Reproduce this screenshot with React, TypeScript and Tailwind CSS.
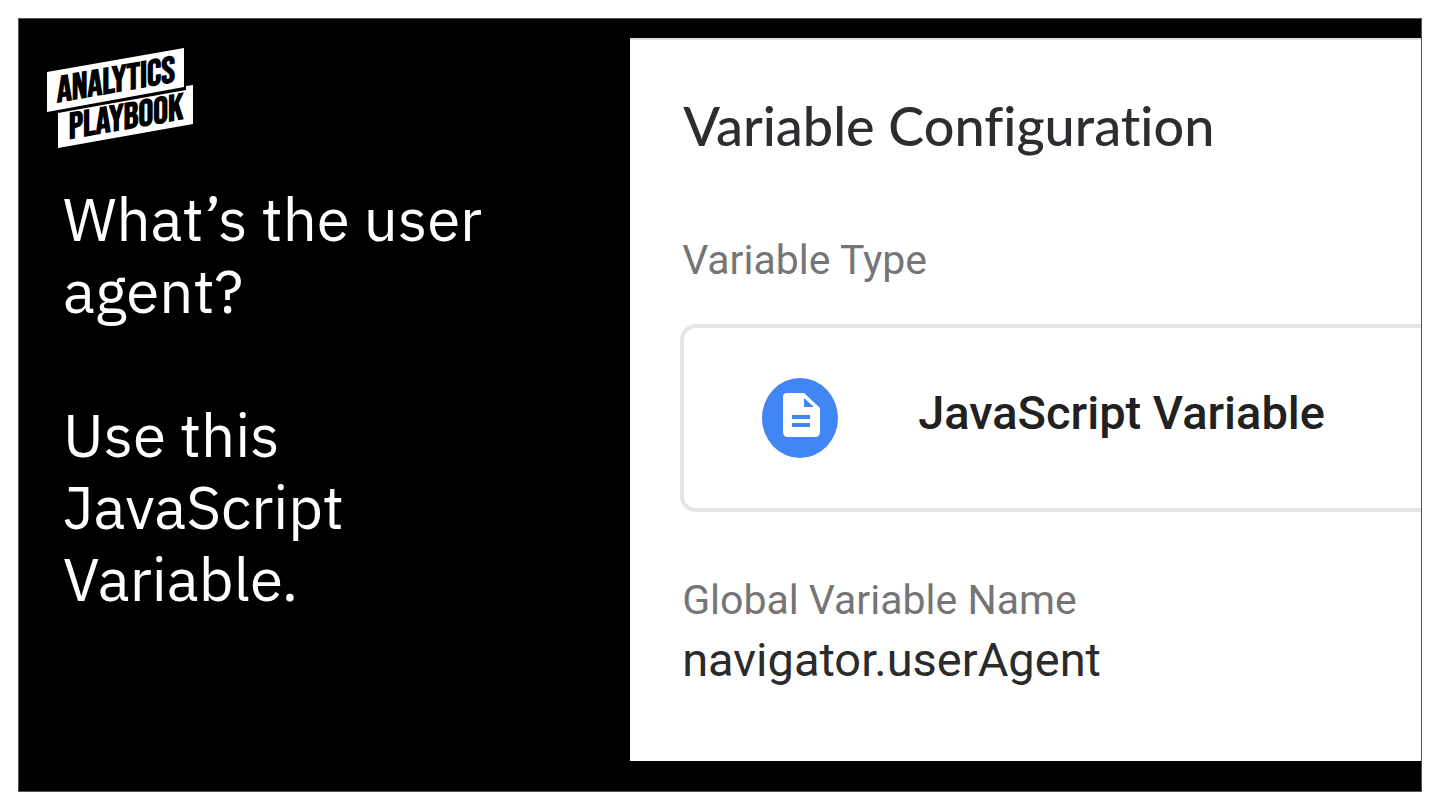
const headline = ["What’s the user agent?", "Use this JavaScript Variable."];

function Logo() {
  return (
    <svg
      className="ml-[27px] h-[102px] w-[148px]"
      viewBox="0 0 148 102"
      role="img"
      aria-label="Analytics Playbook"
    >
      <path d="M1 25 138 1v39L1 65Z" fill="#fff" />
      <path d="M12 66 140 43v-4l7-1v39L12 101Z" fill="#fff" />
      <g
        fill="#000"
        textAnchor="middle"
        className="font-['Bebas_Neue','Oswald','Roboto_Condensed','Liberation_Sans',sans-serif] text-[37px] font-bold"
      >
        <text transform="translate(70 45) skewY(-10)">ANALYTICS</text>
        <text transform="translate(80 82) skewY(-10)">PLAYBOOK</text>
      </g>
    </svg>
  );
}

function DocIcon() {
  return (
    <svg className="h-20 w-[76px] shrink-0" viewBox="0 0 76 80" aria-hidden="true">
      <ellipse cx="38" cy="40" rx="38" ry="40" fill="#4285f4" />
      <path
        d="M25 15h17l16 15v24q0 5-5 5H26q-5 0-5-5V19q0-4 4-4Z"
        fill="#fff"
      />
      <path d="M42 20v9h10Z" fill="#4285f4" />
      <path d="M30 39h18M30 47h18" stroke="#4285f4" strokeWidth="4" />
    </svg>
  );
}

function VariablePanel() {
  return (
    <section className="mt-[19px] mb-[30px] overflow-hidden border-t-2 border-[#dedede] bg-white pt-[54px] pl-[50px] font-[Roboto,sans-serif] whitespace-nowrap">
      <h2 className="pl-[3px] font-['Google_Sans','Product_Sans',Lato,sans-serif] text-[54px] leading-16 font-medium text-[#2b2d31] [font-variant-ligatures:none]">
        Variable Configuration
      </h2>

      <h3 className="mt-[78px] pl-[2px] text-[41px] leading-12 text-[#757575]">
        Variable Type
      </h3>
      <button
        type="button"
        className="mt-10 flex h-[188px] w-full items-center gap-20 rounded-l-2xl border-4 border-r-0 border-[#e4e4e4] pl-[78px] text-left text-[47px] font-medium text-[#212121]"
      >
        <DocIcon />
        <span className="pb-2.5">JavaScript Variable</span>
      </button>

      <dl className="mt-16 pl-[2px]">
        <dt className="text-[41px] leading-12 text-[#757575]">
          Global Variable Name
        </dt>
        <dd className="mt-2 text-[47px] leading-14 text-[#2b2b2b]">
          navigator.userAgent
        </dd>
      </dl>
    </section>
  );
}

export default function App() {
  return (
    <div className="flex min-h-screen bg-white p-[18px]">
      <main className="grid flex-1 grid-cols-[612fr_792fr] border border-[#555] bg-black">
        <div className="pt-7">
          <Logo />
          <div className="mt-[34px] flex flex-col gap-[72px] pr-24 pl-11 font-['IBM_Plex_Sans','Open_Sans',sans-serif] text-[60px] leading-[72px] text-white">
            {headline.map((line) => (
              <p key={line}>{line}</p>
            ))}
          </div>
        </div>
        <VariablePanel />
      </main>
    </div>
  );
}
